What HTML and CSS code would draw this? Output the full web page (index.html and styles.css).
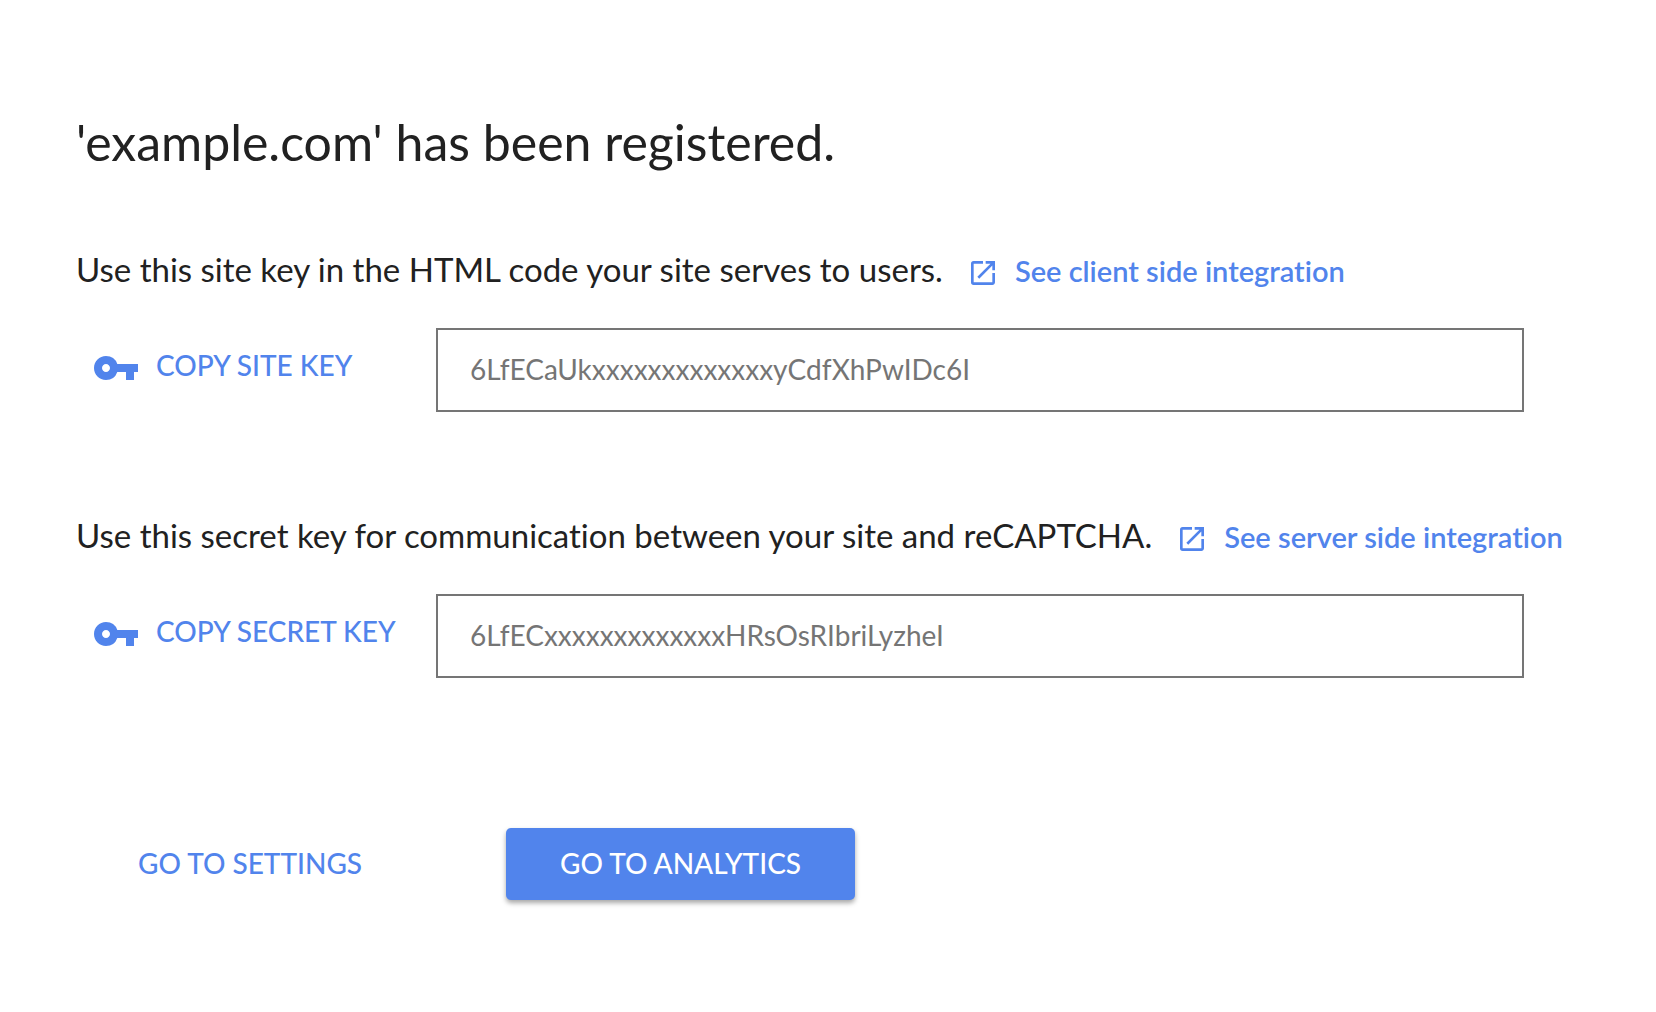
FILE: index.html
```html
<!DOCTYPE html>
<html lang="en">
<head>
<meta charset="utf-8">
<title>reCAPTCHA keys</title>
<link rel="stylesheet" href="styles.css">
</head>
<body>
<main class="page">
  <h1 class="title">'example.com' has been registered.</h1>

  <section class="key-section">
    <div class="intro">
      <label class="intro-text" for="site-key">Use this site key in the HTML code your site serves to users.</label>
      <a class="guide" href="#client"><svg class="open-icon" viewBox="0 0 24 24" aria-hidden="true"><path d="M19 19H5V5h7V3H5a2 2 0 0 0-2 2v14a2 2 0 0 0 2 2h14c1.1 0 2-.9 2-2v-7h-2v7zM14 3v2h3.59l-9.83 9.83 1.41 1.41L19 6.41V10h2V3h-7z"/></svg>See client side integration</a>
    </div>
    <div class="key-row">
      <button class="copy" type="button"><svg class="key-icon" viewBox="0 0 24 24" aria-hidden="true"><path d="M12.65 10A5.99 5.99 0 0 0 7 6c-3.31 0-6 2.69-6 6s2.69 6 6 6a5.99 5.99 0 0 0 5.65-4H17v4h4v-4h2v-4H12.65zM7 14c-1.1 0-2-.9-2-2s.9-2 2-2 2 .9 2 2-.9 2-2 2z"/></svg>COPY SITE KEY</button>
      <input class="key-value" id="site-key" type="text" readonly value="6LfECaUkxxxxxxxxxxxxxyCdfXhPwIDc6I">
    </div>
  </section>

  <section class="key-section">
    <div class="intro">
      <label class="intro-text" for="secret-key">Use this secret key for communication between your site and reCAPTCHA.</label>
      <a class="guide" href="#server"><svg class="open-icon" viewBox="0 0 24 24" aria-hidden="true"><path d="M19 19H5V5h7V3H5a2 2 0 0 0-2 2v14a2 2 0 0 0 2 2h14c1.1 0 2-.9 2-2v-7h-2v7zM14 3v2h3.59l-9.83 9.83 1.41 1.41L19 6.41V10h2V3h-7z"/></svg>See server side integration</a>
    </div>
    <div class="key-row">
      <button class="copy" type="button"><svg class="key-icon" viewBox="0 0 24 24" aria-hidden="true"><path d="M12.65 10A5.99 5.99 0 0 0 7 6c-3.31 0-6 2.69-6 6s2.69 6 6 6a5.99 5.99 0 0 0 5.65-4H17v4h4v-4h2v-4H12.65zM7 14c-1.1 0-2-.9-2-2s.9-2 2-2 2 .9 2 2-.9 2-2 2z"/></svg>COPY SECRET KEY</button>
      <input class="key-value" id="secret-key" type="text" readonly value="6LfECxxxxxxxxxxxxxHRsOsRIbriLyzheI">
    </div>
  </section>

  <div class="actions">
    <button class="action" type="button">GO TO SETTINGS</button>
    <button class="action action-primary" type="button">GO TO ANALYTICS</button>
  </div>
</main>
</body>
</html>
```
FILE: styles.css
```css
* { box-sizing: border-box; }
body {
  margin: 0;
  background: #fff;
  color: #212121;
  font-family: "Product Sans", "Google Sans", Lato, sans-serif;
  font-variant-ligatures: none;
}
button, input { font-family: inherit; }
.page { padding: 110px 76px 80px; }
.title {
  margin: 0 0 70px;
  font-size: 50px;
  line-height: 64px;
  font-weight: 400;
}
.intro {
  display: flex;
  align-items: center;
  gap: 24px;
  height: 52px;
  white-space: nowrap;
}
.intro-text {
  padding-bottom: 2px;
  font-size: 33px;
}
.guide {
  display: flex;
  align-items: center;
  gap: 16px;
  color: #5184ec;
  font-size: 29px;
  font-weight: 600;
  text-decoration: none;
}
.open-icon {
  width: 32px;
  height: 32px;
  margin-top: 6px;
  fill: currentColor;
}
.key-row { display: flex; margin: 32px 56px 98px 0; }
.copy {
  display: flex;
  align-items: center;
  gap: 16px;
  width: 360px;
  height: 76px;
  padding: 0 0 2px 16px;
  border: 0;
  background: none;
  color: #5184ec;
  font-size: 28px;
  font-weight: 500;
  white-space: nowrap;
}
.key-icon {
  width: 48px;
  height: 48px;
  margin-top: 6px;
  fill: currentColor;
}
.key-value {
  flex: 1;
  min-width: 0;
  height: 84px;
  padding: 0 32px 2px;
  border: 2px solid #757575;
  color: #757575;
  font-size: 28px;
}
.actions { display: flex; gap: 90px; margin-top: 150px; padding-left: 8px; }
.action {
  height: 72px;
  padding: 0 54px 2px;
  border: 0;
  border-radius: 5px;
  background: none;
  color: #5184ec;
  font-size: 28px;
  font-weight: 500;
}
.action-primary {
  background: #5184ec;
  color: #fff;
  box-shadow: 0 3px 5px rgba(0,0,0,.35);
}
```
